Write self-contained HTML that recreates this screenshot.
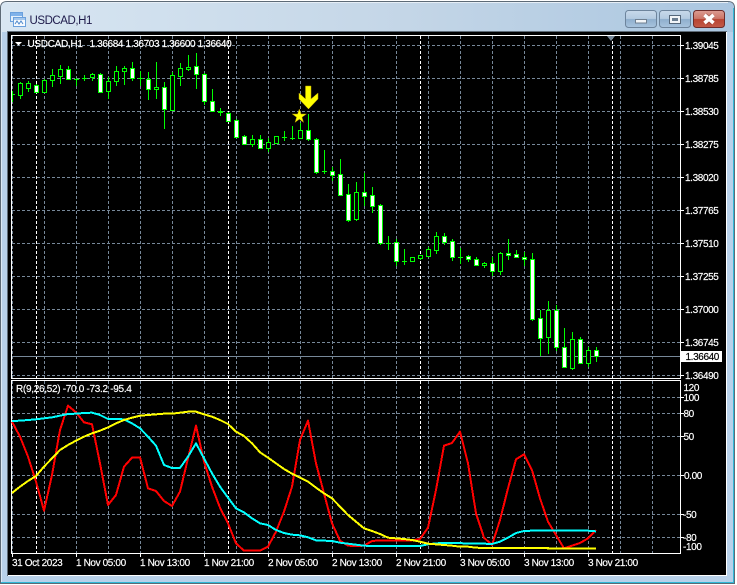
<!DOCTYPE html>
<html>
<head>
<meta charset="utf-8">
<title>USDCAD,H1</title>
<style>
html,body{margin:0;padding:0;width:737px;height:585px;overflow:hidden;background:#fff}
svg{display:block}
text{font-family:"Liberation Sans",sans-serif;font-size:10px;fill:#fff;stroke:#fff;stroke-width:.18px;letter-spacing:-.38px}
</style>
</head>
<body>
<svg width="737" height="585" viewBox="0 0 737 585" xmlns="http://www.w3.org/2000/svg">
<defs>
<linearGradient id="t" x1="0" x2="1" y1="0" y2="0"><stop offset="0" stop-color="#d8e6f2"/><stop offset=".55" stop-color="#c4d6e7"/><stop offset="1" stop-color="#aac6e0"/></linearGradient>
<linearGradient id="b" x1="0" x2="0" y1="0" y2="1"><stop offset="0" stop-color="#c8d9ea"/><stop offset=".48" stop-color="#b4cbe1"/><stop offset=".52" stop-color="#8fafcd"/><stop offset="1" stop-color="#a9c4de"/></linearGradient>
<linearGradient id="c" x1="0" x2="0" y1="0" y2="1"><stop offset="0" stop-color="#dc9c92"/><stop offset=".48" stop-color="#cc7668"/><stop offset=".52" stop-color="#b84432"/><stop offset="1" stop-color="#c25a48"/></linearGradient>
<clipPath id="m"><rect x="12" y="36" width="668" height="342"/></clipPath>
</defs>

<!-- window frame -->
<rect width="737" height="585" fill="#fff"/>
<path d="M.5 582V8Q.5 1.5 7 1.5H728Q734.5 1.5 734.5 8V583.5H.5z" fill="#b8d1ea" stroke="#5d6a76"/>
<path d="M1 32V8Q1 2 7 2H728Q734 2 734 8V32z" fill="url(#t)"/>
<rect x="7" y="2" width="721" height="1" fill="#e6eef6"/>
<rect x="1" y="8" width="1" height="574" fill="#dce9f5"/>
<rect x="733" y="8" width="1" height="575" fill="#2fb8d8"/>
<rect x="1" y="582" width="733" height="1" fill="#2fb8d8"/>

<!-- title icon -->
<rect x="10.5" y="12.5" width="12" height="9" fill="#e4f0fb" stroke="#6aa0dc"/>
<rect x="11" y="13" width="11" height="3" fill="#7fb2ea"/>
<rect x="13.5" y="17.5" width="12" height="9" fill="#f6fafe" stroke="#6aa0dc"/>
<rect x="14" y="18" width="11" height="2" fill="#a4c8ee"/>
<path d="M15 24l2-3 2 3 2-3 2 3" fill="none" stroke="#4d88cc"/>
<text x="29.5" y="24" style="font-size:11.5px;letter-spacing:-.45px;fill:#1d1a4a;stroke:none">USDCAD,H1</text>

<!-- window buttons -->
<rect x="625.5" y="10.5" width="31" height="17" rx="3" fill="url(#b)" stroke="#6d849c"/>
<rect x="635.5" y="19.5" width="11" height="3.5" fill="#f2f5f8" stroke="#6f7f90"/>
<rect x="659.5" y="10.5" width="31" height="17" rx="3" fill="url(#b)" stroke="#6d849c"/>
<rect x="669.5" y="15.5" width="11" height="8" fill="#f2f5f8" stroke="#55677a"/>
<rect x="672" y="18" width="6" height="3" fill="#6a7d90"/>
<rect x="693.5" y="10.5" width="31" height="17" rx="3" fill="url(#c)" stroke="#6e2c2a"/>
<path d="M705 15l8 8M713 15l-8 8" fill="none" stroke="#5c2420" stroke-width="5" stroke-opacity=".35"/>
<path d="M704.5 15l9 8M713.5 15l-9 8" fill="none" stroke="#fff" stroke-width="3.6"/>

<!-- chart panel -->
<rect x="7" y="31" width="720" height="545" fill="#fff"/>
<rect x="7" y="31" width="720" height="1" fill="#5f6c78"/>
<rect x="7" y="31" width="1" height="545" fill="#5f6c78"/>
<rect x="8" y="32" width="718" height="543" fill="#000"/>

<g shape-rendering="crispEdges">
<!-- horizontal grid -->
<path d="M12 45.5H680M12 78.5H680M12 111.5H680M12 144.5H680M12 177.5H680M12 210.5H680M12 243.5H680M12 276.5H680M12 309.5H680M12 342.5H680M12 375.5H680M12 397.5H680M12 413.5H680M12 436.5H680M12 475.5H680M12 514.5H680M12 537.5H680" stroke="#778899" stroke-dasharray="3 2" fill="none"/>
<!-- vertical grid -->
<path d="M12.5 36V378M44.5 36V378M76.5 36V378M108.5 36V378M140.5 36V378M172.5 36V378M204.5 36V378M236.5 36V378M268.5 36V378M300.5 36V378M332.5 36V378M364.5 36V378M396.5 36V378M428.5 36V378M460.5 36V378M492.5 36V378M524.5 36V378M556.5 36V378M588.5 36V378M620.5 36V378M652.5 36V378M12.5 381V553M44.5 381V553M76.5 381V553M108.5 381V553M140.5 381V553M172.5 381V553M204.5 381V553M236.5 381V553M268.5 381V553M300.5 381V553M332.5 381V553M364.5 381V553M396.5 381V553M428.5 381V553M460.5 381V553M492.5 381V553M524.5 381V553M556.5 381V553M588.5 381V553M620.5 381V553M652.5 381V553" stroke="#778899" stroke-dasharray="3 2" fill="none"/>
<path d="M36.5 36V378M228.5 36V378M420.5 36V378M612.5 36V378M36.5 381V553M228.5 381V553M420.5 381V553M612.5 381V553" stroke="#fff" stroke-dasharray="3 2" fill="none"/>
<!-- price line -->
<path d="M12 356.5H680" stroke="#778899"/>

<g clip-path="url(#m)">
<!-- wicks and doji -->
<path stroke="#0f0" fill="none" d="M12.5 91V102M20.5 82V99M28.5 81V92M36.5 84V93M44.5 79V92M52.5 69V87M60.5 65V84M68.5 66V79M76.5 78V86M84.5 75V81M92.5 73V81M100.5 73V92M108.5 77V99M116.5 66V86M124.5 66V85M132.5 62V81M140.5 71V86M148.5 72V100M156.5 62V99M164.5 82V129M172.5 72V110M180.5 63V86M188.5 55V71M196.5 53V89M204.5 73V105M212.5 89V112M220.5 108V116M228.5 112V122M236.5 119V137M244.5 135V145M252.5 135V147M260.5 135V148M268.5 138V152M276.5 136V143M284.5 131V141M292.5 126V140M300.5 123V138M308.5 114V141M316.5 138V174M324.5 150V174M332.5 167V181M340.5 159V195M348.5 184V222M356.5 182V221M364.5 173V206M372.5 187V213M380.5 204V245M388.5 236V250M396.5 239V266M404.5 249V265M412.5 257V262M420.5 255V260M428.5 247V256M436.5 232V254M444.5 233V245M452.5 239V261M460.5 248V264M468.5 255V262M476.5 257V266M484.5 262V268M492.5 257V276M500.5 252V275M508.5 239V260M516.5 250V258M524.5 252V266M532.5 253V321M540.5 310V356M548.5 301V354M556.5 305V351M564.5 328V367M572.5 332V370M580.5 337V363M588.5 347V367M596.5 347V362M10 94.5H15M74 79.5H79M82 78.5H87M138 78.5H143M218 112.5H223M218 111.5H223M282 137.5H287M290 138.5H295M322 171.5H327M386 243.5H391M402 261.5H407M458 257.5H463"/>
<!-- hollow bodies -->
<path stroke="#0f0" fill="#000" d="M18.5 83.5h4v12h-4zM26.5 83.5h4v5h-4zM42.5 80.5h4v12h-4zM50.5 75.5h4v5h-4zM58.5 69.5h4v7h-4zM90.5 74.5h4v3h-4zM106.5 81.5h4v10h-4zM114.5 71.5h4v10h-4zM122.5 68.5h4v3h-4zM154.5 87.5h4v2h-4zM170.5 75.5h4v35h-4zM178.5 68.5h4v8h-4zM186.5 67.5h4v2h-4zM250.5 139.5h4v5h-4zM266.5 142.5h4v6h-4zM274.5 136.5h4v7h-4zM298.5 130.5h4v8h-4zM354.5 192.5h4v27h-4zM410.5 257.5h4v4h-4zM418.5 255.5h4v3h-4zM426.5 249.5h4v7h-4zM434.5 236.5h4v14h-4zM482.5 263.5h4v2h-4zM498.5 253.5h4v18h-4zM546.5 310.5h4v27h-4zM570.5 339.5h4v29h-4zM586.5 350.5h4v13h-4z"/>
<!-- filled bodies -->
<path stroke="#0f0" fill="#fff" d="M34.5 85.5h4v7h-4zM66.5 69.5h4v10h-4zM98.5 74.5h4v18h-4zM130.5 68.5h4v10h-4zM146.5 79.5h4v10h-4zM162.5 87.5h4v22h-4zM194.5 66.5h4v8h-4zM202.5 74.5h4v27h-4zM210.5 101.5h4v10h-4zM226.5 113.5h4v8h-4zM234.5 120.5h4v17h-4zM242.5 136.5h4v8h-4zM258.5 139.5h4v9h-4zM306.5 130.5h4v9h-4zM314.5 139.5h4v33h-4zM330.5 171.5h4v4h-4zM338.5 174.5h4v21h-4zM346.5 194.5h4v26h-4zM362.5 192.5h4v4h-4zM370.5 195.5h4v11h-4zM378.5 205.5h4v38h-4zM394.5 242.5h4v19h-4zM442.5 236.5h4v6h-4zM450.5 241.5h4v16h-4zM466.5 256.5h4v3h-4zM474.5 259.5h4v6h-4zM490.5 263.5h4v8h-4zM506.5 253.5h4v2h-4zM514.5 254.5h4v3h-4zM522.5 257.5h4v2h-4zM530.5 259.5h4v60h-4zM538.5 318.5h4v20h-4zM554.5 310.5h4v37h-4zM562.5 347.5h4v20h-4zM578.5 339.5h4v24h-4zM594.5 350.5h4v6h-4z"/>
</g>

<!-- borders -->
<path d="M11.5 35.5H680.5V378.5H11.5zM11.5 380.5H680.5V553.5H11.5z" fill="none" stroke="#fff"/>
<!-- axis ticks -->
<path d="M681 45.5h3M681 78.5h3M681 111.5h3M681 144.5h3M681 177.5h3M681 210.5h3M681 243.5h3M681 276.5h3M681 309.5h3M681 342.5h3M681 375.5h3M681 397.5h3M681 413.5h3M681 436.5h3M681 475.5h3M681 514.5h3M681 537.5h3M76.5 554v3M140.5 554v3M204.5 554v3M268.5 554v3M332.5 554v3M396.5 554v3M460.5 554v3M524.5 554v3M588.5 554v3M12.5 554v3" stroke="#fff" fill="none"/>
<rect x="681" y="351" width="41" height="11" fill="#fff"/>

<!-- indicator lines -->
<g transform="translate(0,375) scale(1,.33333)" fill="none" stroke-width="2" stroke-linejoin="round">
<polyline vector-effect="non-scaling-stroke" stroke="#f00" points="12,140 20,185 28,245 36,320 44,407 52,300 60,165 68,92 76,112 84,142 92,148 100,265 108,390 116,360 124,275 132,248 140,247 148,340 156,348 164,378 172,393 180,350 188,250 196,152 204,260 212,335 220,398 228,445 236,505 244,527 252,527 260,527 268,515 276,470 284,410 292,335 300,195 308,137 316,265 324,355 332,445 340,497 348,512 356,513 364,512 372,498 380,496 388,496 396,496 404,496 412,496 420,492 428,458 436,345 444,212 452,204 460,170 468,265 476,415 484,488 492,510 500,435 508,340 516,253 524,238 532,285 540,370 548,440 556,480 564,520 572,512 580,504 588,490 596,465"/>
<polyline vector-effect="non-scaling-stroke" stroke="#0ff" points="12,138 20,137 28,135 36,133 44,130 52,127 60,122 68,117 76,116 84,114 92,113 100,120 108,132 116,132 124,133 132,145 140,160 148,185 156,212 164,270 172,279 180,279 188,245 196,205 204,250 212,295 220,335 228,368 236,400 244,412 252,430 260,445 268,450 276,465 284,474 292,479 300,481 308,487 316,496 324,497 332,498 340,503 348,506 356,509 364,512 372,513 420,513 428,508 436,505 444,504 468,505 476,506 484,506 492,507 500,500 508,488 516,474 524,468 532,467 588,467 596,469"/>
<polyline vector-effect="non-scaling-stroke" stroke="#ff0" points="12,354 20,335 28,318 36,303 44,275 52,250 60,225 68,210 76,197 84,185 92,175 100,167 108,157 116,145 124,135 132,128 140,122 148,120 156,118 164,116 172,116 180,113 188,110 196,110 204,118 212,125 220,135 228,147 236,170 244,183 252,205 260,232 268,248 276,265 284,282 292,296 300,308 308,320 316,338 324,355 332,370 340,395 348,420 356,440 364,460 372,468 380,477 388,488 396,490 404,492 412,495 420,500 428,506 436,508 444,510 452,512 460,515 468,515 476,518 484,519 548,519 548,521 596,521"/>
</g>
</g>

<!-- period marker and top-left triangle -->
<polygon points="607,36 615,36 611,41" fill="#778899"/>
<polygon points="15,42 22,42 18.5,45.5" fill="#fff"/>

<!-- arrow & star -->
<polygon points="299,93 305.5,99 305.5,86 311,86 311,99 318,93 318,99 308.5,109 299,99" fill="#ff0" stroke="#b8a000" stroke-width=".5"/>
<polygon points="299.3,109 301,114 306.4,114 302,117.2 303.6,122.4 299.3,119.2 295,122.4 296.6,117.2 292.2,114 297.6,114" fill="#ff0" stroke="#a88a00" stroke-width=".5"/>

<!-- texts -->
<text x="27.5" y="47" style="letter-spacing:-.3px">USDCAD,H1</text>
<text x="89.5" y="47" style="letter-spacing:-.36px">1.36684 1.36703 1.36600 1.36640</text>
<text x="16" y="392" style="letter-spacing:-.3px">R(9,26,52) -70.0 -73.2 -95.4</text>
<text x="685" y="49">1.39045</text>
<text x="685" y="82">1.38785</text>
<text x="685" y="115">1.38530</text>
<text x="685" y="148">1.38275</text>
<text x="685" y="181">1.38020</text>
<text x="685" y="214">1.37765</text>
<text x="685" y="247">1.37510</text>
<text x="685" y="280">1.37255</text>
<text x="685" y="313">1.37000</text>
<text x="685" y="346">1.36745</text>
<text x="685" y="379">1.36490</text>
<text x="685.5" y="360" style="fill:#000;stroke:#000">1.36640</text>
<text x="683.5" y="391">120</text>
<text x="683.5" y="401">100</text>
<text x="683.5" y="417">80</text>
<text x="683.5" y="440">50</text>
<text x="684" y="479">0.00</text>
<text x="683" y="518">-50</text>
<text x="683" y="541">-80</text>
<text x="683" y="550">-100</text>
<text x="12" y="566">31 Oct 2023</text>
<text x="76" y="566">1 Nov 05:00</text>
<text x="140" y="566">1 Nov 13:00</text>
<text x="204" y="566">1 Nov 21:00</text>
<text x="268" y="566">2 Nov 05:00</text>
<text x="332" y="566">2 Nov 13:00</text>
<text x="396" y="566">2 Nov 21:00</text>
<text x="460" y="566">3 Nov 05:00</text>
<text x="524" y="566">3 Nov 13:00</text>
<text x="588" y="566">3 Nov 21:00</text>
</svg>
</body>
</html>
